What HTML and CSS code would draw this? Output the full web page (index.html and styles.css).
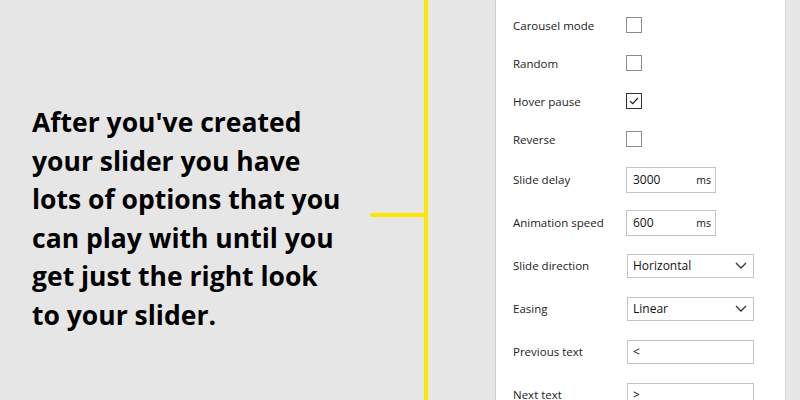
FILE: index.html
```html
<!DOCTYPE html>
<html lang="en">
<head>
<meta charset="utf-8">
<title>Slider options</title>
<link rel="stylesheet" href="styles.css">
</head>
<body>
<div class="page">
  <div class="intro">
    <p class="intro-text">After you've created<br>your slider you have<br>lots of options that you<br>can play with until you<br>get just the right look<br>to your slider.</p>
    <div class="connector"></div>
  </div>
  <div class="rail"></div>
  <div class="gap"></div>
  <div class="panel">
    <div class="row check-row">
      <span class="label">Carousel mode</span>
      <span class="checkbox"></span>
    </div>
    <div class="row check-row">
      <span class="label">Random</span>
      <span class="checkbox"></span>
    </div>
    <div class="row check-row">
      <span class="label">Hover pause</span>
      <span class="checkbox checked">
        <svg viewBox="0 0 16 16" width="14" height="14"><path d="M3.5 8.2 L6.6 11 L12.4 4.6" fill="none" stroke="#222" stroke-width="1.4"/></svg>
      </span>
    </div>
    <div class="row check-row">
      <span class="label">Reverse</span>
      <span class="checkbox"></span>
    </div>
    <div class="row field-row">
      <span class="label">Slide delay</span>
      <span class="unit-input"><span class="value">3000</span><span class="unit">ms</span></span>
    </div>
    <div class="row field-row">
      <span class="label">Animation speed</span>
      <span class="unit-input"><span class="value">600</span><span class="unit">ms</span></span>
    </div>
    <div class="row field-row">
      <span class="label">Slide direction</span>
      <span class="select"><span class="value">Horizontal</span>
        <svg class="chevron" viewBox="0 0 12 7" width="12" height="7"><path d="M1 1 L6 6 L11 1" fill="none" stroke="#333" stroke-width="1.3"/></svg>
      </span>
    </div>
    <div class="row field-row">
      <span class="label">Easing</span>
      <span class="select"><span class="value">Linear</span>
        <svg class="chevron" viewBox="0 0 12 7" width="12" height="7"><path d="M1 1 L6 6 L11 1" fill="none" stroke="#333" stroke-width="1.3"/></svg>
      </span>
    </div>
    <div class="row field-row">
      <span class="label">Previous text</span>
      <span class="text-input"><span class="value">&lt;</span></span>
    </div>
    <div class="row field-row">
      <span class="label">Next text</span>
      <span class="text-input"><span class="value">&gt;</span></span>
    </div>
  </div>
  <div class="edge"></div>
</div>
</body>
</html>
```

FILE: styles.css
```css
* { box-sizing: border-box; }
html, body { margin: 0; padding: 0; }
body {
  width: 800px;
  height: 400px;
  overflow: hidden;
  background: #e6e6e6;
}
.page {
  display: grid;
  grid-template-columns: 424px 4px 67px 291px 14px;
  height: 400px;
  background: #e6e6e6;
}
.intro {
  display: flex;
  align-items: flex-start;
}
.intro-text {
  flex: 1;
  margin: 103px 0 0 0;
  padding-left: 32px;
  font-family: "Open Sans", "Noto Sans", sans-serif;
  font-weight: 700;
  font-size: 26.5px;
  line-height: 38.5px;
  color: #000;
  white-space: nowrap;
}
.connector {
  flex-shrink: 0;
  width: 54px;
  height: 4px;
  margin-top: 213px;
  background: #ffe600;
  border-radius: 2px 0 0 2px;
}
.rail {
  background: #ffe600;
}
.panel {
  background: #fff;
  border-left: 1px solid #cfcfcf;
  border-right: 1px solid #d6d6d6;
  padding: 6px 0 0 17px;
  font-family: "Open Sans", "Noto Sans", sans-serif;
  font-size: 11.5px;
  color: #222;
}
.row {
  display: flex;
  align-items: center;
}
.check-row { height: 38px; }
.field-row { height: 43px; }
.label { width: 113px; flex-shrink: 0; }
.checkbox {
  width: 16px;
  height: 16px;
  border: 1px solid #8c8c8c;
  display: flex;
  align-items: center;
  justify-content: center;
}
.checkbox.checked { border-color: #333; }
.unit-input {
  width: 90px;
  height: 26px;
  border: 1px solid #c4c4c4;
  display: flex;
  align-items: center;
  justify-content: space-between;
  padding: 0 4px 0 6px;
  color: #111;
  font-size: 12px;
}
.unit-input .unit { font-size: 10.5px; }
.select, .text-input {
  width: 127px;
  height: 24px;
  margin-left: 1px;
  border: 1px solid #c4c4c4;
  display: flex;
  align-items: center;
  justify-content: space-between;
  padding: 0 6px 0 5px;
  color: #111;
  font-size: 12px;
}
```
